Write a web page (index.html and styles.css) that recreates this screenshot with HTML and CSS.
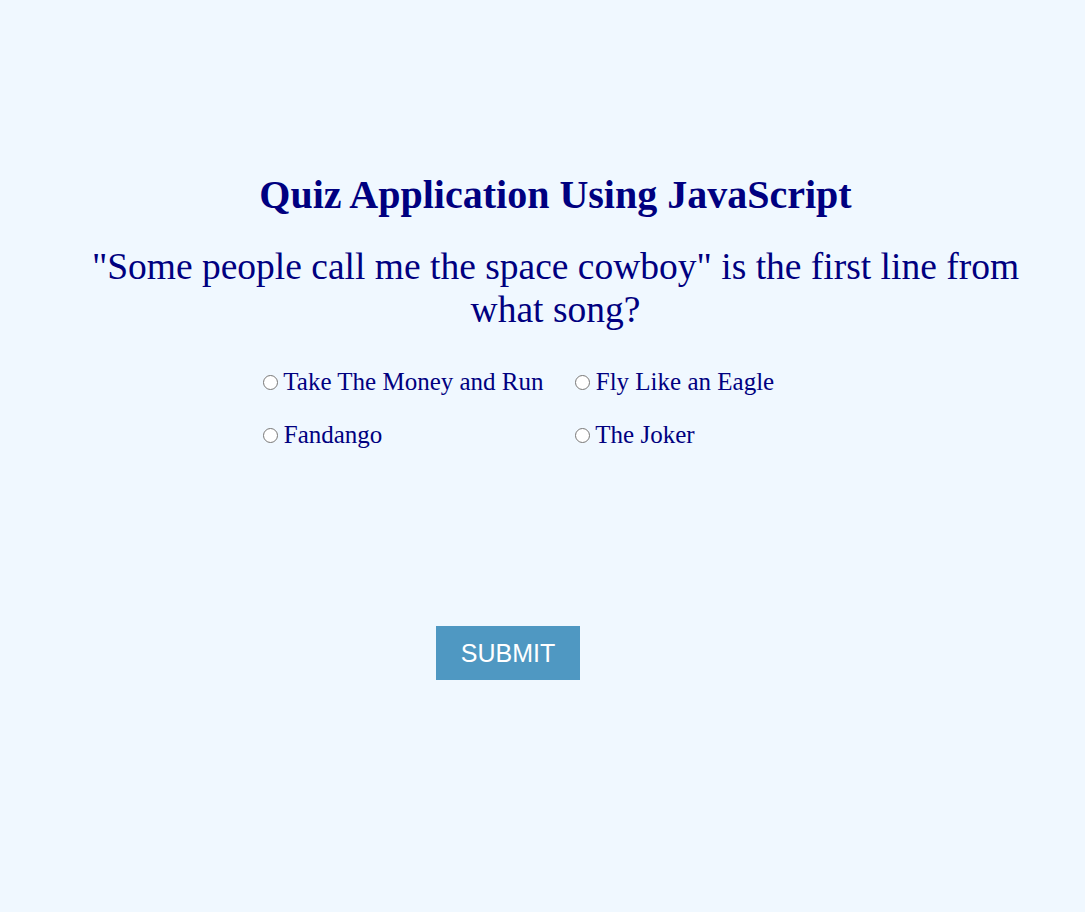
FILE: index.html
```html
<!DOCTYPE html>
<html>
<head>
<meta charset="utf-8">
<title>Quiz Application</title>
<link rel="stylesheet" href="styles.css">
</head>
<body>
<div class="quiz">
  <h1 class="title">Quiz Application Using JavaScript</h1>
  <h2 class="question">"Some people call me the space cowboy" is the first line from what song?</h2>
  <ul class="answers">
    <li><label><input type="radio" name="a"> Take The Money and Run</label></li>
    <li><label><input type="radio" name="a"> Fly Like an Eagle</label></li>
    <li><label><input type="radio" name="a"> Fandango</label></li>
    <li><label><input type="radio" name="a"> The Joker</label></li>
  </ul>
  <div class="actions">
    <button class="submit">SUBMIT</button>
  </div>
</div>
</body>
</html>
```
FILE: styles.css
```css
html, body {
  margin: 0;
  padding: 0;
  background: #f0f8ff;
}
body {
  font-family: "Liberation Serif", "Times New Roman", serif;
  color: #000080;
}
.quiz {
  padding: 172px 0 0 26px;
  text-align: center;
}
.title {
  margin: 0;
  font-size: 40px;
  font-weight: bold;
  line-height: 46px;
}
.question {
  margin: 27px 50px 0;
  font-size: 37.5px;
  font-weight: normal;
  line-height: 43px;
}
.answers {
  list-style: none;
  width: 600px;
  margin: 37px auto 0;
  padding: 0 13px 0 27px;
  display: grid;
  grid-template-columns: 1fr 1fr;
  column-gap: 24px;
  row-gap: 22px;
  text-align: left;
  font-size: 25px;
}
.answers li {
  height: 31px;
}
.answers input {
  margin: 0;
  width: 15px;
  height: 15px;
}
.actions {
  margin-top: 174px;
  text-align: left;
  padding-left: 410px;
}
.submit {
  width: 144px;
  height: 54px;
  border: none;
  background: #4f98c2;
  color: #fff;
  font-family: "Liberation Sans", Arial, sans-serif;
  font-size: 25px;
}
```
